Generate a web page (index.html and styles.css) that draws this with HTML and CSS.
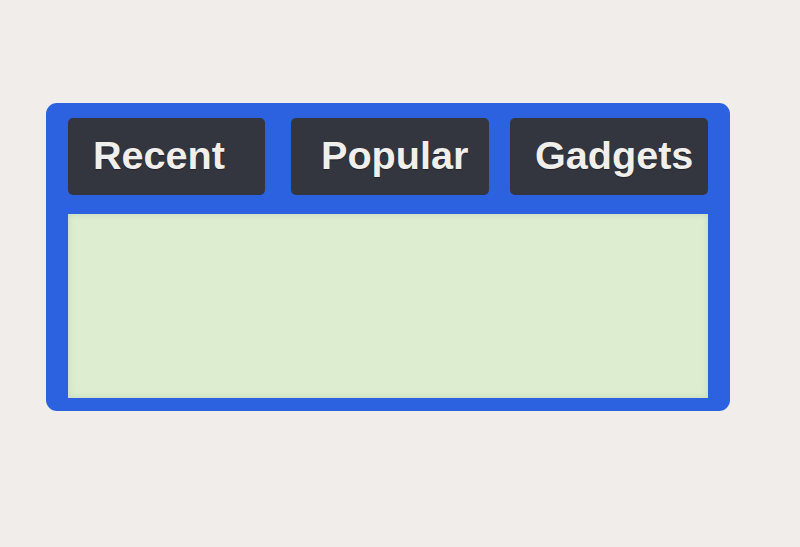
FILE: index.html
```html
<!DOCTYPE html>
<html>
<head>
<meta charset="utf-8">
<link rel="stylesheet" href="styles.css">
</head>
<body>
<div class="widget">
  <div class="tabs">
    <div class="tab tab-recent">Recent</div>
    <div class="tab tab-popular">Popular</div>
    <div class="tab tab-gadgets">Gadgets</div>
  </div>
  <div class="panel"></div>
</div>
</body>
</html>
```
FILE: styles.css
```css
html, body {
  margin: 0;
  padding: 0;
}
body {
  background: #f0edeb;
  width: 800px;
  height: 547px;
  overflow: hidden;
  font-family: "Liberation Sans", Arial, sans-serif;
}
.widget {
  margin: 103px 0 0 46px;
  width: 684px;
  height: 308px;
  box-sizing: border-box;
  padding: 15px 22px 13px 22px;
  background: #2c62e0;
  border-radius: 11px;
  display: flex;
  flex-direction: column;
}
.tabs {
  display: flex;
  height: 77px;
}
.tab {
  width: 197px;
  height: 77px;
  box-sizing: border-box;
  padding-bottom: 2px;
  line-height: 75px;
  background: #33353f;
  border-radius: 5px;
  color: #f1efeb;
  font-weight: bold;
  font-size: 39.6px;
  white-space: nowrap;
  text-shadow: 0 1px 1px rgba(0, 0, 0, 0.35);
}
.tab-recent {
  padding-left: 25px;
}
.tab-popular {
  margin-left: 26px;
  width: 198px;
  padding-left: 30px;
}
.tab-gadgets {
  margin-left: 21px;
  width: 198px;
  padding-left: 25px;
}
.panel {
  margin-top: 19px;
  height: 184px;
  background: #dcedd0;
  box-shadow: inset 0 0 6px rgba(120, 150, 110, 0.25);
}
```
